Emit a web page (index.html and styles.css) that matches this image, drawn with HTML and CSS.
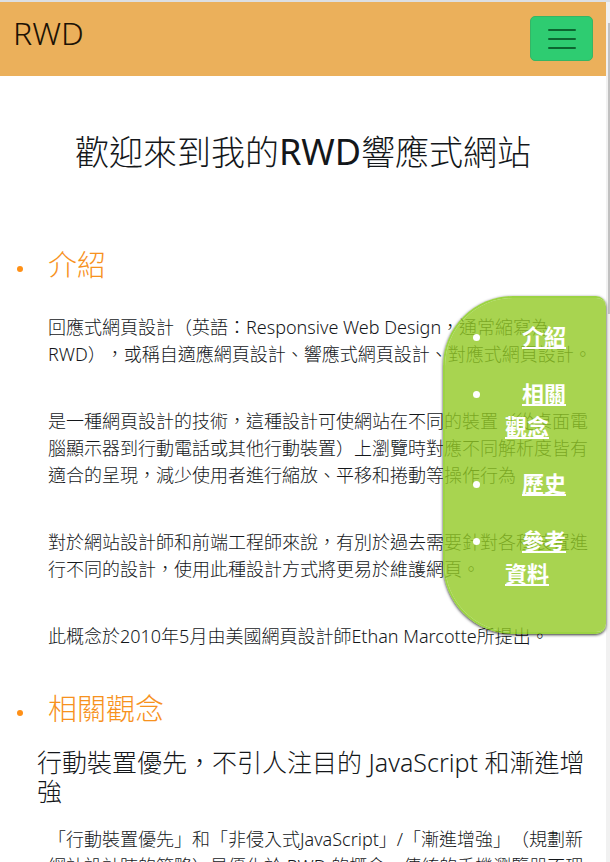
FILE: index.html
```html
<!DOCTYPE html>
<html lang="zh-Hant">
<head>
<meta charset="utf-8">
<meta name="viewport" content="width=device-width, initial-scale=1">
<title>RWD</title>
<link rel="stylesheet" href="styles.css">
</head>
<body>
<div class="viewport">
  <div class="page">
    <header class="navbar">
      <a class="brand" href="#">RWD</a>
      <button class="toggler" type="button" aria-label="選單">
        <svg viewBox="0 0 32 32" width="32" height="32" aria-hidden="true"><path d="M3 7h26M3 16h26M3 25h26"/></svg>
      </button>
    </header>
    <main class="content">
      <h1 class="title">歡迎來到我的<span class="latin">RWD</span>響應式網站</h1>
      <ul class="sections">
        <li class="section" id="intro">
          <h2 class="heading">介紹</h2>
          <div class="paragraphs">
            <p>回應式網頁設計（英語：Responsive Web Design，通常縮寫為RWD），或稱自適應網頁設計、響應式網頁設計、對應式網頁設計。</p>
            <p>是一種網頁設計的技術，這種設計可使網站在不同的裝置（從桌面電腦顯示器到行動電話或其他行動裝置）上瀏覽時對應不同解析度皆有適合的呈現，減少使用者進行縮放、平移和捲動等操作行為</p>
            <p>對於網站設計師和前端工程師來說，有別於過去需要針對各種裝置進行不同的設計，使用此種設計方式將更易於維護網頁。</p>
            <p>此概念於2010年5月由美國網頁設計師Ethan Marcotte所提出。</p>
          </div>
        </li>
        <li class="section" id="concepts">
          <h2 class="heading">相關觀念</h2>
          <h3 class="subheading">行動裝置優先，不引人注目的 JavaScript 和漸進增強</h3>
          <div class="paragraphs">
            <p>「行動裝置優先」和「非侵入式JavaScript」/「漸進增強」（規劃新網站設計時的策略）是優化於 RWD 的概念，傳統的手機瀏覽器不理解</p>
          </div>
        </li>
      </ul>
    </main>
    <nav class="side-menu" aria-label="章節">
      <ul>
        <li><a href="#intro">介紹</a></li>
        <li><a href="#concepts">相關觀念</a></li>
        <li><a href="#">歷史</a></li>
        <li><a href="#">參考資料</a></li>
      </ul>
    </nav>
  </div>
  <div class="scrollbar"><div class="thumb"></div></div>
</div>
</body>
</html>
```
FILE: styles.css
```css
* { box-sizing: border-box; }
body {
  margin: 0;
  background: #fff;
  color: #14171a;
  font: 300 18px/27px "Noto Sans", "Noto Sans CJK TC", sans-serif;
  text-spacing-trim: space-all;
}
h1, h2, h3, p, ul { margin: 0; padding: 0; }
h1, h2, h3 { font-weight: 300; }
ul { list-style: none; }
.viewport {
  display: flex;
  height: 100vh;
  overflow: hidden;
  border-top: 2px solid #dcdfe3;
}
.page { position: relative; flex: 1; min-width: 0; }
.navbar {
  display: flex;
  justify-content: space-between;
  align-items: flex-start;
  padding: 14px 13px 15px;
  background: #ebb05b;
}
.brand {
  color: #1c1205;
  font-size: 32px;
  line-height: 34px;
  text-decoration: none;
}
.toggler {
  display: flex;
  align-items: center;
  justify-content: center;
  width: 63px;
  height: 45px;
  padding: 0;
  border: 1px solid #35b565;
  border-radius: 5px;
  background: #2ecc71;
}
.toggler path {
  fill: none;
  stroke: #0c6630;
  stroke-width: 2;
  stroke-linecap: round;
}
.content { padding: 56px 13px 0 48px; }
.title {
  margin: 0 -13px 75px -48px;
  text-align: center;
  font-size: 34px;
  line-height: 40px;
}
.latin { font-size: 36px; font-weight: 400; }
.section { margin-bottom: 41px; }
.heading {
  position: relative;
  color: #f7921e;
  font-size: 29px;
  line-height: 35px;
}
.heading::before {
  content: "";
  position: absolute;
  left: -31px;
  top: 19px;
  width: 6px;
  height: 6px;
  border-radius: 50%;
  background: #ff9016;
}
.paragraphs {
  display: grid;
  gap: 40px;
  margin-top: 32px;
}
.subheading {
  margin: 22px 0 0 -11px;
  font-size: 25px;
  line-height: 29px;
}
.subheading + .paragraphs { margin-top: 20px; }
.side-menu {
  position: absolute;
  top: 294px;
  right: 0;
  width: 163px;
  padding: 22px 28px 18px;
  border: 2px solid rgba(132, 200, 20, 0.8);
  border-right: 0;
  border-radius: 70px 10px 10px 70px;
  background: rgba(146, 201, 36, 0.8);
  background-clip: padding-box;
  box-shadow: 0 1px 3px rgba(0, 0, 0, 0.8);
  color: #fff;
  font-size: 22px;
  font-weight: 700;
  line-height: 33px;
}
.side-menu li {
  display: flex;
  gap: 25px;
  margin-bottom: 24px;
}
.side-menu li::before {
  content: "";
  flex: none;
  width: 7px;
  height: 7px;
  margin-top: 14px;
  border-radius: 50%;
  background: #fff;
}
.side-menu a {
  display: block;
  color: #fff;
  text-indent: 17px;
  text-decoration: underline;
}
.scrollbar {
  width: 4px;
  padding: 21px 0 0 2px;
  background: #f1f1f1;
}
.thumb { height: 291px; background: #c1c1c1; }
```
